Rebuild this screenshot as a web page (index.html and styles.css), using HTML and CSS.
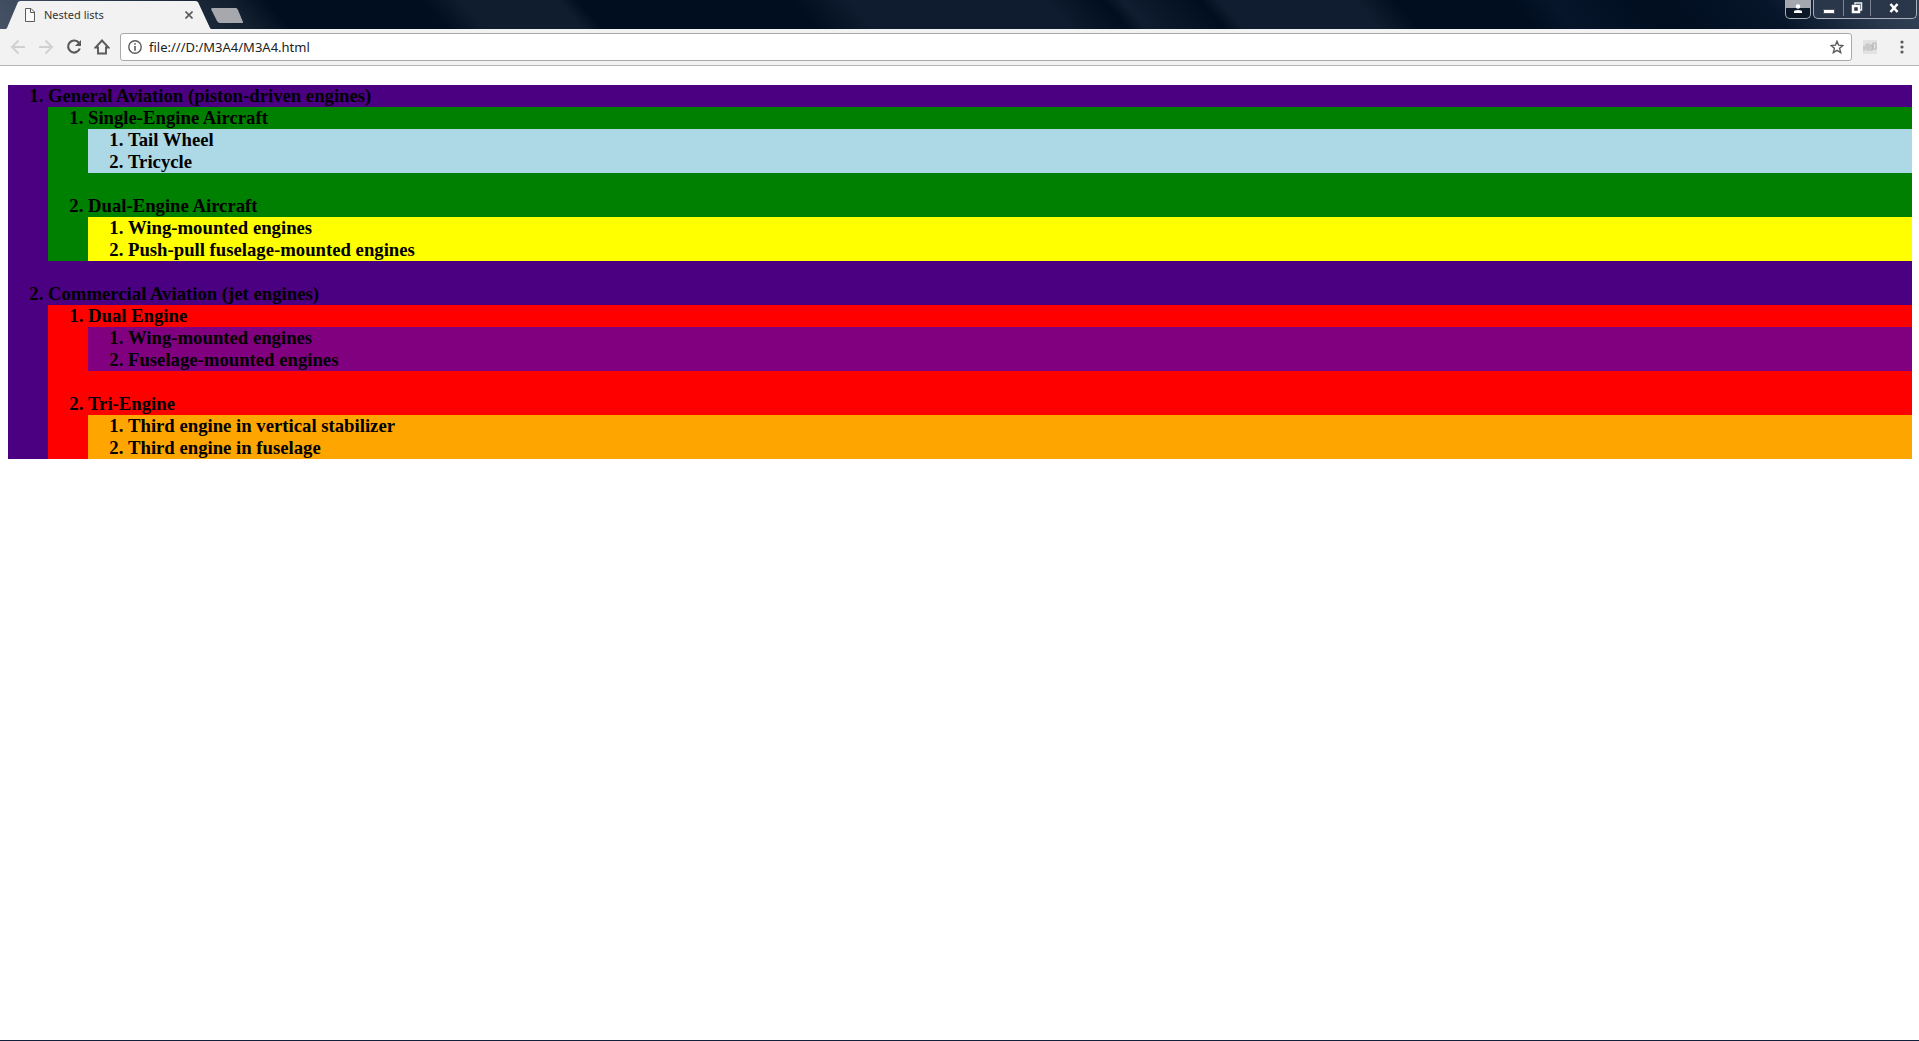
FILE: index.html
```html
<!DOCTYPE html>
<html lang="en">
<head>
<meta charset="utf-8">
<title>Nested lists</title>
<link rel="stylesheet" href="styles.css">
</head>
<body>
<div class="browser">
  <header class="titlebar">
    <div class="tab">
      <svg class="tab-shape" viewBox="0 0 205 28" preserveAspectRatio="none" aria-hidden="true"><path d="M0 28L1 27L12 1L14 0H190L192 1L204 27L205 28Z" fill="#f2f2f2"/></svg>
      <svg class="file-icon" viewBox="0 0 12 14" aria-hidden="true"><path d="M1.500.5H7L10.500 4V13.500H1.500ZM6.500.5V4.500H10.500" fill="#fafafa" stroke="#5a5a5a"/></svg>
      <span class="tab-title">Nested lists</span>
      <button class="tab-close" aria-label="Close tab"><svg viewBox="0 0 8 8"><path d="M.5.5L7.500 7.500M7.500.5L.5 7.500" stroke="#5a5a5a" stroke-width="1.600"/></svg></button>
    </div>
    <button class="new-tab" aria-label="New tab"><svg viewBox="0 0 32 15"><path d="M1 0H25Q26 0 27 2L32 14V15H9Q7 15 6 13L0 1Z" fill="#a6a8ad"/></svg></button>
    <div class="window-controls">
      <button class="profile" aria-label="Profile"><svg width="10" height="10" viewBox="0 0 10 10"><circle cx="5" cy="2.500" r="2.200" fill="#fff"/><path d="M1 9V7.500Q1 6 5 6T9 7.500V9Z" fill="#fff"/></svg></button>
      <div class="control-group">
        <button class="control minimize" aria-label="Minimize"><svg width="12" height="12" viewBox="0 0 12 12"><path d="M.5 7.500H11.500V11.500H.5Z" fill="#fff" stroke="#4a5160"/></svg></button>
        <button class="control restore" aria-label="Restore"><svg width="12" height="12" viewBox="0 0 12 12"><path d="M4 2.500V1H10.500V8H9" fill="none" stroke="#eee" stroke-width="1.500"/><rect x="2" y="4" width="6" height="6" fill="none" stroke="#fff" stroke-width="2.500"/></svg></button>
        <button class="control close" aria-label="Close"><svg width="12" height="12" viewBox="0 0 12 12"><path d="M2.500 2L9.500 10M9.500 2L2.500 10" stroke="#fff" stroke-width="2.600"/></svg></button>
      </div>
    </div>
  </header>
  <nav class="toolbar">
    <div class="tools">
      <button class="tool" aria-label="Back" disabled><svg viewBox="0 0 16 16"><path d="M15 8H2.500M8.500 1.500L2 8L8.500 14.500" fill="none" stroke="#d0d0d0" stroke-width="1.900"/></svg></button>
      <button class="tool" aria-label="Forward" disabled><svg viewBox="0 0 16 16"><path d="M1 8H13.500M7.500 1.500L14 8L7.500 14.500" fill="none" stroke="#d0d0d0" stroke-width="1.900"/></svg></button>
      <button class="tool" aria-label="Reload"><svg viewBox="0 0 16 16"><path d="M13 4A6 6 0 1 0 13.800 9.500" fill="none" stroke="#5a5a5a" stroke-width="2.200"/><path d="M15 1V7H9Z" fill="#5a5a5a"/></svg></button>
      <button class="tool" aria-label="Home"><svg viewBox="0 0 16 16"><path d="M8 1.500L1.500 8.500H4V14.500H12V8.500H14.500Z" fill="none" stroke="#5a5a5a" stroke-width="1.900"/></svg></button>
    </div>
    <div class="address">
      <svg class="info" viewBox="0 0 14 14" aria-hidden="true"><circle cx="7" cy="7" r="6.200" fill="none" stroke="#5a5a5a" stroke-width="1.400"/><path d="M7 3.200V4.800M7 6V10.800" stroke="#5a5a5a" stroke-width="1.600"/></svg>
      <input class="url" type="text" value="file:///D:/M3A4/M3A4.html" aria-label="Address">
      <button class="star" aria-label="Bookmark"><svg viewBox="0 0 14 14"><path d="M7 1.300L8.600 5.200L12.900 5.500L9.600 8.300L10.700 12.600L7 10.300L3.300 12.600L4.400 8.300L1.100 5.500L5.400 5.200Z" fill="none" stroke="#5a5a5a" stroke-width="1.400"/></svg></button>
    </div>
    <button class="extension" aria-label="Extension"><svg viewBox="0 0 16 16"><path d="M1 1H15V15H1Z" fill="#e2e2e2"/><path d="M2 7V12M4 5V11M6 4V12M8 6H10V11H8ZM11 4H14V10H11Z" fill="none" stroke="#bababa" stroke-width="1.200"/></svg></button>
    <button class="menu" aria-label="Menu"><svg viewBox="0 0 4 14"><circle cx="2" cy="2" r="1.600" fill="#5a5a5a"/><circle cx="2" cy="7" r="1.600" fill="#5a5a5a"/><circle cx="2" cy="12" r="1.600" fill="#5a5a5a"/></svg></button>
  </nav>
  <main class="page">
    <h3 class="outline">
      <ol class="list indigo">
        <li>General Aviation (piston-driven engines)
          <ol class="list green">
            <li>Single-Engine Aircraft
              <ol class="list lightblue">
                <li>Tail Wheel</li>
                <li>Tricycle</li>
              </ol>
            </li>
            <li>Dual-Engine Aircraft
              <ol class="list yellow">
                <li>Wing-mounted engines</li>
                <li>Push-pull fuselage-mounted engines</li>
              </ol>
            </li>
          </ol>
        </li>
        <li>Commercial Aviation (jet engines)
          <ol class="list red">
            <li>Dual Engine
              <ol class="list purple">
                <li>Wing-mounted engines</li>
                <li>Fuselage-mounted engines</li>
              </ol>
            </li>
            <li>Tri-Engine
              <ol class="list orange">
                <li>Third engine in vertical stabilizer</li>
                <li>Third engine in fuselage</li>
              </ol>
            </li>
          </ol>
        </li>
      </ol>
    </h3>
  </main>
</div>
</body>
</html>
```
FILE: styles.css
```css
* { box-sizing: border-box; }
body { margin: 0; background: #fff; }
button { border: 0; padding: 0; background: none; display: flex; align-items: center; justify-content: center; }
svg { display: block; }

.browser { min-height: 100vh; display: flex; flex-direction: column; border-bottom: 1px solid #12203c; }

.titlebar {
  height: 29px;
  display: flex;
  align-items: flex-start;
  padding: 1px 0 0 6px;
  background: linear-gradient(49deg, #465367 0, #253347 8%, #12202f 13%, #010e20 15%, #010e20 23%, #0f1d2f 25%, #0f1d2f 30%, #010e20 31%, #010e20 42%, #0f1b2e 45%, #0f1b2e 55%, #010e20 58%, #101d30 59%, #010e20 63%, #101d30 64%, #101d30 71%, #010e20 73%, #010e20 79%, #06152a 81%, #010e20 86%, #07152a 92%, #2a384d 97%, #35435a 100%);
}

.tab { position: relative; width: 205px; height: 28px; display: flex; align-items: center; padding: 0 18px; }
.tab-shape { position: absolute; inset: 0; width: 100%; height: 100%; }
.file-icon { position: relative; width: 12px; height: 14px; }
.tab-title { position: relative; flex: 1; margin-left: 8px; font: 11px/16px "Noto Sans", sans-serif; color: #333; }
.tab-close { position: relative; width: 8px; height: 28px; }
.tab-close svg { width: 8px; height: 8px; }
.new-tab { height: 15px; margin-top: 7px; }
.new-tab svg { width: 32px; height: 15px; }

.window-controls { margin: -1px 2px 0 auto; display: flex; gap: 2px; }
.profile, .control-group { height: 19px; border: 1px solid #a8afb9; border-top: 0; border-radius: 0 0 5px 5px; }
.profile { width: 26px; background: linear-gradient(#a4a8ae 0 8px, #0c1728 8px); align-items: flex-start; padding-top: 4px; }
.control-group { display: flex; width: 104px; background: #2a3649; padding-bottom: 2px; }
.control { border-right: 1px solid #7a8492; }
.minimize { width: 30px; }
.restore { width: 27px; }
.close { flex: 1; border: 0; }

.toolbar { height: 37px; display: flex; align-items: center; padding: 0 15px 0 10px; gap: 10px; background: #f2f2f2; border-bottom: 1px solid #b5b5b5; }
.tools { display: flex; gap: 12px; }
.tool svg { width: 16px; height: 16px; }
.address { flex: 1; height: 28px; display: flex; align-items: center; padding: 0 7px; background: #fff; border: 1px solid #a9a9a9; border-radius: 3px; }
.info, .star svg { width: 14px; height: 14px; }
.url { flex: 1; min-width: 0; border: 0; padding: 0 7px; outline: 0; background: none; font: 13px/20px "Noto Sans", sans-serif; color: #222; }
.extension svg { width: 16px; height: 16px; }
.menu { margin-left: 12px; }
.menu svg { width: 4px; height: 14px; }

.page { padding: 19px 7px 0 8px; font-family: "Liberation Serif", serif; color: #000; }
.outline { margin: 0; line-height: 22px; }
.list { margin: 0; padding-left: 40px; list-style: decimal; }
.list li:not(:last-child):has(ol) { padding-bottom: 22px; }
.indigo { background: indigo; }
.green { background: green; }
.lightblue { background: lightblue; }
.yellow { background: yellow; }
.red { background: red; }
.purple { background: purple; }
.orange { background: orange; }
```
